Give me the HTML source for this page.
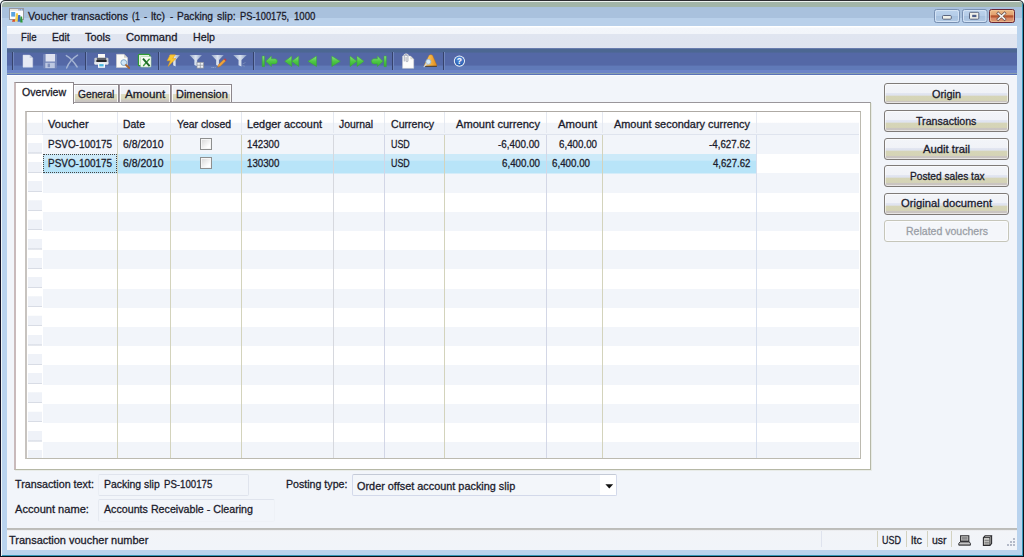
<!DOCTYPE html>
<html><head><meta charset="utf-8"><title>Voucher transactions (1 - ltc) - Packing slip: PS-100175, 1000</title>
<style>
html,body{margin:0;padding:0;}
body{width:1024px;height:557px;overflow:hidden;background:#fff;font-family:"Liberation Sans",sans-serif;font-size:11.5px;color:#1b1b2b;position:relative;}
.a{position:absolute;}
.t{position:absolute;white-space:nowrap;line-height:14px;height:14px;font-size:0;}
.w{display:inline-block;line-height:14px;transform-origin:0 0;-webkit-text-stroke:0.3px currentColor;}
#win{left:0;top:0;width:1024px;height:557px;background:#b7d0ea;border-radius:5px 5px 0 0;overflow:hidden;}
#frame{left:0;top:0;width:1022px;height:555px;border:1px solid #14142a;border-top-color:#2b2b30;border-right-color:#10101c;border-bottom-color:#10101c;border-radius:5px 5px 0 0;box-shadow:inset 1px 1px 0 rgba(245,248,246,.9),inset -1px -1px 0 #3398b8;}
.tab{position:absolute;top:84px;height:17px;border:1px solid #8d878c;border-left-color:#a59ca4;border-bottom:none;background:linear-gradient(#f1f3f7 0,#eff1f6 8.5px,#dcdcc4 9.5px,#d8d7ba 14px,#cbc7c2 15px,#c9c5c1 17px);box-shadow:inset 1px 1px 0 rgba(255,255,255,.85),inset -1px 0 0 rgba(255,255,255,.85);}
.btn{position:absolute;left:884px;width:123px;height:20px;border:1px solid #7f7b78;border-radius:3px;background:linear-gradient(#f3f5f9 0,#f0f2f7 8.8px,#e0e4f0 9.6px,#dfe3ef 11.3px,#d6d5b8 11.9px,#d5d4b6 16.4px,#cac5c1 17.4px,#c9c4c0 20px);box-shadow:inset 0 0 0 1px rgba(255,255,255,.55);}
.vsep{position:absolute;top:134.5px;width:1px;height:323.5px;background:#d3d3bc;}
.hsep{position:absolute;top:112px;width:1px;height:21px;background:#e5e9f1;}
.tsep{position:absolute;top:52px;width:1px;height:20px;background:#39466e;box-shadow:1px 0 0 #7f93c4;}
.ssep{position:absolute;top:531px;width:1px;height:16px;background:#d3d2c0;}
</style></head><body>
<div id="win" class="a">
  <!-- title bar -->
  <div class="a" style="left:0;top:0;width:1024px;height:7px;background:#a2b5a8;"></div>
  <div class="a" style="left:0;top:6.5px;width:1024px;height:11.5px;background:#a9c1dd;"></div>
  <div class="a" style="left:0;top:18px;width:1024px;height:9px;background:#b9d0ea;"></div>
  <div class="a" style="left:0;top:27px;width:1024px;height:530px;background:#b9d3ee;"></div>
  <!-- client area -->
  <div class="a" style="left:7px;top:26px;width:1010px;height:523px;background:#f2f5fa;"></div>
  <!-- menubar -->
  <div class="a" style="left:7px;top:26px;width:1010px;height:22.5px;background:linear-gradient(#ffffff 0,#ffffff 1.2px,#f3f6fb 1.8px,#f2f5fa 7.8px,#e0e5f0 8.4px,#dfe4f0 21.5px,#a6a6aa 22.2px);"></div>
  <!-- toolbar -->
  <div class="a" style="left:7px;top:48px;width:1010px;height:28px;background:linear-gradient(#a4a4a8 0,#6f80ae 0.4px,#5a72b0 0.7px,#5a72b0 1px,#4c6792 1.3px,#4c6792 4.3px,#5468a6 4.8px,#5468a6 17.3px,#607ab8 17.8px,#607ab8 21.8px,#6c84c8 22.3px,#6c84c8 24.9px,#8aa0b0 25.2px,#8aa0b0 25.8px,#5a72b8 26px,#5a72b8 26.7px,#fafcfe 27px,#fafcfe 28px);"></div>
  <svg class="a" style="left:0;top:0;" width="1024" height="557" viewBox="0 0 1024 557">
  <defs>
    <linearGradient id="gg" x1="0" y1="0" x2="0" y2="1"><stop offset="0" stop-color="#8be27f"/><stop offset="0.5" stop-color="#4fc845"/><stop offset="1" stop-color="#35b02f"/></linearGradient>
    <linearGradient id="fg" x1="0" y1="0" x2="1" y2="0"><stop offset="0" stop-color="#93a6c6"/><stop offset="0.5" stop-color="#dbe3ef"/><stop offset="1" stop-color="#8a9ec4"/></linearGradient>
    <radialGradient id="hg" cx="0.5" cy="0.3" r="0.8"><stop offset="0" stop-color="#5b93e0"/><stop offset="1" stop-color="#1b4fa3"/></radialGradient>
    <linearGradient id="bg1" x1="0" y1="0" x2="1" y2="0"><stop offset="0" stop-color="#fbe49a"/><stop offset="0.45" stop-color="#f7b747"/><stop offset="1" stop-color="#e08a1c"/></linearGradient>
  </defs>
  <!-- separators -->
  <g>
    <rect x="12" y="52" width="1" height="18" fill="#36436c"/><rect x="13" y="52" width="1" height="18" fill="#7187bd"/>
    <rect x="85" y="52" width="1" height="18" fill="#36436c"/><rect x="86" y="52" width="1" height="18" fill="#7187bd"/>
    <rect x="158" y="52" width="1" height="18" fill="#36436c"/><rect x="159" y="52" width="1" height="18" fill="#7187bd"/>
    <rect x="253" y="52" width="1" height="18" fill="#36436c"/><rect x="254" y="52" width="1" height="18" fill="#7187bd"/>
    <rect x="392" y="52" width="1" height="18" fill="#36436c"/><rect x="393" y="52" width="1" height="18" fill="#7187bd"/>
    <rect x="443" y="52" width="1" height="18" fill="#36436c"/><rect x="444" y="52" width="1" height="18" fill="#7187bd"/>
  </g>
  <!-- new doc -->
  <path d="M23 55.100h6.700l3 3V67.200H23z" fill="#e6eaf4" stroke="#d3d9e8" stroke-width="0.5"/>
  <path d="M29.7 55.100v3h3z" fill="#c3cbdf"/>
  <!-- save (disabled) -->
  <rect x="43" y="53.9" width="14" height="14.7" rx="1" fill="#7587b9"/>
  <rect x="45.6" y="54" width="9.4" height="7.5" fill="#dfe3f0"/>
  <rect x="45.3" y="62.8" width="9.5" height="5.3" fill="#bcc8e1"/>
  <rect x="47.6" y="63.6" width="2.4" height="3.6" fill="#7f90bd"/>
  <!-- delete X (disabled) -->
  <path d="M66.3 55.600C69.5 57.2 74 62 77.2 67M77.6 55.200C73 58 68.5 63.5 66.6 68" fill="none" stroke="#a3b3d2" stroke-width="1.4" stroke-linecap="round"/>
  <!-- print -->
  <rect x="98" y="54" width="7" height="4.2" fill="#f8f9f6"/>
  <rect x="94.4" y="57.8" width="14" height="6.6" rx="1" fill="#c9cdd3"/>
  <rect x="96.9" y="57.8" width="9.3" height="2.3" fill="#5c606a"/>
  <rect x="96.4" y="60" width="10.2" height="2" fill="#25272b"/>
  <rect x="94.4" y="62" width="14" height="2.4" rx="0.6" fill="#e6e9ee"/>
  <rect x="98" y="63.3" width="7" height="4.5" fill="#f4f8fb"/>
  <rect x="99.3" y="64.1" width="4.3" height="2.3" fill="#4ab8e0"/>
  <!-- preview -->
  <path d="M116.5 54.300h7.5l3.5 3.5V67.5h-11z" fill="#fafaf6" stroke="#d4d4cc" stroke-width="0.5"/>
  <path d="M124 54.300v3.5h3.5z" fill="#d0d0c8"/>
  <circle cx="123.8" cy="62.6" r="2.9" fill="#cfe6f6" stroke="#7fa7c8" stroke-width="1"/>
  <path d="M126 65l3.2 3" stroke="#a8642c" stroke-width="1.8" stroke-linecap="round"/>
  <!-- excel -->
  <rect x="138.4" y="54.3" width="11.4" height="11.4" rx="1" fill="#e3f2df" stroke="#2f9a34" stroke-width="1.2"/>
  <rect x="140.6" y="56.5" width="10.4" height="10.6" rx="0.8" fill="#f7fbf5" stroke="#a5d3a0" stroke-width="0.6"/>
  <path d="M149.6 58.800L143.2 66" stroke="#3f9a40" stroke-width="1.4"/>
  <path d="M143 58.600L149.6 66.2" stroke="#1d6a28" stroke-width="1.9"/>
  <!-- filter lightning -->
  <path d="M169 55h11l-4.3 5v6.5l-2.6-1.200V60z" fill="url(#fg)"/>
  <path d="M170.2 54.700h5.200l-2.7 3.900h3.300l-8 7.8 2.4-5.600h-3.300z" fill="#fbc832" stroke="#e59a14" stroke-width="0.5"/>
  <!-- filter grid -->
  <path d="M189.5 55h12.5l-4.8 5v6.200l-2.9-1.200V60z" fill="url(#fg)"/>
  <rect x="197" y="62.3" width="6.6" height="5.8" fill="#eef0f4" stroke="#8a8f98" stroke-width="0.7"/>
  <path d="M197 65.200h6.600M200.3 62.300v5.8" stroke="#8a8f98" stroke-width="0.7"/>
  <!-- filter pencil -->
  <path d="M211.3 55h12.5l-4.8 5v6.200l-2.9-1.200V60z" fill="url(#fg)"/>
  <path d="M217.6 67.300l1-2.7 5.4-5.4 1.7 1.7-5.4 5.400z" fill="#f0a23a" stroke="#b86a1a" stroke-width="0.4"/>
  <path d="M224 59.200l1-1 1.7 1.7-1 1z" fill="#c23a4a"/>
  <path d="M211.5 67.5h4" stroke="#aab6d4" stroke-width="0.8" stroke-dasharray="1 0.7"/>
  <!-- filter plain -->
  <path d="M233.2 55h13.600l-5.3 5v6.5l-3-1.300V60z" fill="url(#fg)"/>
  <path d="M242.5 64l3-1.5M242.5 65.5l2.5 0.8" stroke="#8496bd" stroke-width="0.7"/>
  <!-- nav: first -->
  <g fill="url(#gg)" stroke="#3aa636" stroke-width="0.5" stroke-linejoin="round">
    <rect x="262.2" y="56" width="2.3" height="10.6"/>
    <path d="M265.8 61.300l5.6-5.300v2.700h3.300a2.6 2.6 0 0 1 0 5.200h-3.300v2.700z"/>
    <path d="M284.7 61.300l7-5.300v10.600zM291.7 61.300l7-5.300v10.600z"/>
    <path d="M308 61.300l8.5-5.300v10.600z"/>
    <path d="M340.3 61.300l-8.5-5.300v10.600z"/>
    <path d="M364 61.300l-7-5.300v10.600zM357 61.300l-7-5.300v10.600z"/>
    <path d="M383 61.300l-5.6-5.300v2.700h-3.300a2.6 2.6 0 0 0 0 5.200h3.300v2.700z"/>
    <rect x="384" y="56" width="2.3" height="10.6"/>
  </g>
  <!-- doc w/ clip -->
  <path d="M402.6 56h7.800l3.3 3.300V68.300h-11.100z" fill="#fdfdfb" stroke="#d9d9d2" stroke-width="0.5"/>
  <path d="M410.4 56v3.300h3.300z" fill="#d8d8d0"/>
  <path d="M404.3 61.400v-5.300a1.8 1.8 0 0 1 3.6 0v4.600a0.9 0.9 0 0 1-1.8 0v-3.6" fill="none" stroke="#eceef2" stroke-width="1.7"/>
  <path d="M404.3 61.400v-5.300a1.8 1.8 0 0 1 3.6 0v4.600a0.9 0.9 0 0 1-1.8 0v-3.6" fill="none" stroke="#8d929c" stroke-width="0.6"/>
  <!-- bell -->
  <path d="M428.9 55.600c0.3-1.3 3.5-1.3 3.8 0l4 9.300c0.3 0.9-0.2 1.3-1 1.300h-10.400c-0.8 0-1.3-0.4-1-1.300z" fill="url(#bg1)" stroke="#b06a1a" stroke-width="0.4"/>
  <path d="M424.3 66.300h12.6" stroke="#3d3122" stroke-width="0.9"/>
  <circle cx="428.4" cy="61.8" r="2.5" fill="#d8ecf8" stroke="#9db4cc" stroke-width="0.9"/>
  <path d="M426.6 63.800l-2.5 2.9" stroke="#cdd2da" stroke-width="1.2" stroke-linecap="round"/>
  <!-- help -->
  <circle cx="459.4" cy="61.1" r="5.6" fill="#eef3fa"/>
  <circle cx="459.4" cy="61.1" r="4.6" fill="url(#hg)"/>
  <text x="459.4" y="64.4" text-anchor="middle" font-family="Liberation Sans, sans-serif" font-weight="bold" font-size="8.5" fill="#fff">?</text>
</svg>

  <svg class="a" style="left:0;top:0;" width="1024" height="40" viewBox="0 0 1024 40">
  <defs>
    <linearGradient id="cb" x1="0" y1="0" x2="0" y2="1"><stop offset="0" stop-color="#bdd3ec"/><stop offset="0.5" stop-color="#b4cce8"/><stop offset="0.52" stop-color="#a7c1df"/><stop offset="1" stop-color="#b3cbe6"/></linearGradient>
    <linearGradient id="cr" x1="0" y1="0" x2="0" y2="1"><stop offset="0" stop-color="#edbd86"/><stop offset="0.42" stop-color="#e2a070"/><stop offset="0.48" stop-color="#b4522c"/><stop offset="0.6" stop-color="#b85a34"/><stop offset="0.64" stop-color="#d98868"/><stop offset="1" stop-color="#dc9a6c"/></linearGradient>
  </defs>
  <!-- app icon -->
  <rect x="9.5" y="8.5" width="14" height="11" fill="#fdfdfd" stroke="#98989c" stroke-width="1"/>
  <rect x="10" y="9" width="13" height="1.8" fill="#e4e2dc"/>
  <rect x="18.5" y="9.2" width="1" height="1.2" fill="#4a78c8"/><rect x="20.2" y="9.2" width="1" height="1.2" fill="#4a78c8"/><rect x="21.8" y="9.2" width="1" height="1.2" fill="#4a78c8"/>
  <rect x="11.2" y="12" width="4" height="4.6" fill="#5aa4e0"/>
  <path d="M15 21.500l1-8.300h2v8.300z" fill="#f8cf48"/>
  <path d="M17.600 21.800l0.600-6.800h2l0.800 6.800z" fill="#3d6fc0"/>
  <path d="M20.300 22.500l0.200-6h1.600l0.500 6z" fill="#2f9a36"/>
  <path d="M12 21.800l0.800-2.300h2l0.300 2.300z" fill="#d8502a"/>
  <!-- min -->
  <rect x="934.5" y="9.5" width="25" height="13" rx="2" fill="url(#cb)" stroke="#7890b2" stroke-width="1"/>
  <rect x="935.5" y="10.5" width="23" height="11" rx="1.8" fill="none" stroke="#d8e6f6" stroke-width="1" opacity="0.9"/>
  <rect x="942.5" y="15.5" width="8.8" height="3.700" rx="1" fill="#f1f1ea" stroke="#4d5874" stroke-width="0.9"/>
  <!-- max -->
  <rect x="962.5" y="9.5" width="24.5" height="13" rx="2" fill="url(#cb)" stroke="#7890b2" stroke-width="1"/>
  <rect x="963.5" y="10.5" width="22.5" height="11" rx="1.8" fill="none" stroke="#d8e6f6" stroke-width="1" opacity="0.9"/>
  <rect x="969.5" y="12.3" width="9.3" height="6.9" rx="1" fill="#efefe8" stroke="#4d5874" stroke-width="0.9"/>
  <rect x="972.2" y="14.8" width="4.2" height="2.3" fill="#4d5d88"/>
  <!-- close -->
  <rect x="989.5" y="9.5" width="25" height="13" rx="2" fill="url(#cr)" stroke="#6a2636" stroke-width="1"/>
  <rect x="990.5" y="10.5" width="23" height="11" rx="1.8" fill="none" stroke="#f3cfa8" stroke-width="0.8" opacity="0.700"/>
  <path d="M998.200 13.300l6.400 5.900M1004.600 13.300l-6.400 5.9" stroke="#5e4a4a" stroke-width="2.8" stroke-linecap="square"/>
  <path d="M998.200 13.300l6.400 5.900M1004.600 13.300l-6.400 5.9" stroke="#f6f6f2" stroke-width="1.6" stroke-linecap="square"/>
</svg>


  <!-- tab panel -->
  <div class="a" style="left:14px;top:102px;width:854px;height:366px;background:#fff;border:1px solid #b6b8a6;border-left:2px solid #c9babb;border-top-color:#9a969b;box-shadow:1px 1px 0 rgba(225,228,218,.6);"></div>
  <div class="tab" style="left:73px;width:44px;"></div>
  <div class="tab" style="left:119px;width:50px;"></div>
  <div class="tab" style="left:171px;width:59px;"></div>
  <div class="a" style="left:14px;top:82px;width:57px;height:21px;background:#fff;border:1px solid #8d878c;border-left:2px solid #c9babb;border-bottom:none;"></div>

  <!-- grid -->
  <div class="a" style="left:25px;top:111px;width:833px;height:346px;background:#fff;border:1px solid #aeaaa4;border-left:2px solid #c7c3bf;border-right-color:#bcbab0;border-bottom-color:#bcbab0;overflow:hidden;">
    <!-- header -->
    <div class="a" style="left:0px;top:0.5px;width:832px;height:22.5px;background:linear-gradient(#fff 0,#fff 9.4px,#f1f4f9 9.9px,#f1f4f9 21px,#dfe4ee 21.5px,#e6eaf2 22.5px);"></div>
    <!-- stripes -->
    <div class="a" style="left:16px;top:23px;width:816px;height:330px;background:repeating-linear-gradient(#f2f5fa 0,#f2f5fa 19.2px,#fff 19.2px,#fff 38.4px);"></div>
    <!-- row header column -->
    <div class="a" style="left:1px;top:23px;width:14px;height:330px;background:repeating-linear-gradient(#fff 0,#fff 7.6px,#eff2f8 8px,#eff2f8 17.3px,#d8dce5 17.6px,#d8dce5 18.4px,#fff 18.7px,#fff 19.2px);"></div>
    <div class="a" style="left:1px;top:0.5px;width:14px;height:22px;background:linear-gradient(#fff 0,#fff 9.4px,#f0f3f8 9.9px,#f0f3f8 21px,#dde2ec 22px);"></div>
  </div>
  <!-- selected row -->
  <div class="a" style="left:43px;top:154px;width:713px;height:20px;background:linear-gradient(#cdeaf9 0,#cdeaf9 6.3px,#b8e4f8 6.9px,#b8e4f8 19px,rgba(184,228,248,0) 20px);"></div>
    <div class="vsep" style="left:117px;"></div>
  <div class="vsep" style="left:170px;"></div>
  <div class="vsep" style="left:241px;"></div>
  <div class="vsep" style="left:333px;background:#d6d8de;"></div>
  <div class="vsep" style="left:384px;background:#d2d6e6;"></div>
  <div class="vsep" style="left:444px;"></div>
  <div class="vsep" style="left:545.5px;background:#d3d7e6;"></div>
  <div class="vsep" style="left:602px;"></div>
  <div class="vsep" style="left:756px;background:#d7dfee;"></div>
  <div class="hsep" style="left:42px;"></div>
  <div class="hsep" style="left:117px;"></div>
  <div class="hsep" style="left:170px;"></div>
  <div class="hsep" style="left:241px;"></div>
  <div class="hsep" style="left:333px;"></div>
  <div class="hsep" style="left:384px;"></div>
  <div class="hsep" style="left:444px;"></div>
  <div class="hsep" style="left:545.5px;"></div>
  <div class="hsep" style="left:602px;"></div>
  <div class="hsep" style="left:756px;"></div>

  <div class="a" style="left:43px;top:154px;width:72px;height:17px;border:1px dotted #444;"></div>
  <!-- checkboxes -->
  <div class="a" style="left:200px;top:138px;width:9.5px;height:9.5px;border:1px solid #8e8f8f;background:linear-gradient(135deg,#d6d6d6,#fff 75%);box-shadow:inset 0 0 0 1px #f6f6f6;"></div>
  <div class="a" style="left:200px;top:157px;width:9.5px;height:9.5px;border:1px solid #8e8f8f;background:linear-gradient(135deg,#d6d6d6,#fff 75%);box-shadow:inset 0 0 0 1px #f6f6f6;"></div>

  <!-- buttons -->
  <div class="btn" style="top:83px;height:19px;"></div>
  <div class="btn" style="top:110px;"></div>
  <div class="btn" style="top:138px;"></div>
  <div class="btn" style="top:165px;"></div>
  <div class="btn" style="top:193px;"></div>
  <div class="btn" style="top:220px;background:#f4f6fa;border-color:#c6c6ba;"></div>

  <!-- bottom fields -->
  <div class="a" style="left:98px;top:473.5px;width:148.5px;height:20.5px;border:1px solid #e0e4ed;border-left-color:#eaeef4;border-radius:2px;background:#f2f5fa;"></div>
  <div class="a" style="left:98px;top:499px;width:175px;height:20.5px;border:1px solid #e0e4ed;border-left-color:#e6eaf1;border-right-color:#eef1f6;border-bottom-color:#eff2f7;border-radius:2px;background:#f2f5fa;"></div>
  <div class="a" style="left:352px;top:474px;width:263px;height:20px;border:1px solid #d3d9ea;border-top-color:#c4cad6;border-radius:2px;background:linear-gradient(90deg,#f3f6fa 0,#f3f6fa 247px,#fff 247px,#fff 263px);"></div>
  <svg class="a" style="left:604.5px;top:483.5px;" width="9" height="5" viewBox="0 0 9 5"><path d="M0.4 0.3h7.8L4.3 4.6z" fill="#111"/></svg>

  <!-- status bar -->
  <div class="a" style="left:7px;top:528px;width:1010px;height:21.5px;background:linear-gradient(#e4e6ea 0,#bcbcb9 0.5px,#bdbdba 1.4px,#c9c9c7 2px,#f2f4f8 2.6px,#f1f4f9 21px);"></div>
  <div class="ssep" style="left:821px;background:#dfe3ee;"></div>
  <div class="ssep" style="left:877px;"></div>
  <div class="ssep" style="left:906px;"></div>
  <div class="ssep" style="left:927px;"></div>
  <div class="ssep" style="left:951px;"></div>
  <svg class="a" style="left:950px;top:528px;" width="70" height="22" viewBox="950 528 70 22">
  <!-- computer -->
  <path d="M960.6 535.8h8.2v5.6h-8.2z" fill="#d4d4d0" stroke="#2c2c30" stroke-width="1.1"/>
  <path d="M961.8 537.3h5.8M961.8 538.7h5.8M961.8 540h5.8" stroke="#55555a" stroke-width="0.7"/>
  <path d="M958.8 543.3l1.8-1.9h8.2l1.6 1.9v1.9h-11.6z" fill="#8c8c8e" stroke="#2c2c30" stroke-width="0.9"/>
  <path d="M959.5 543.6h10.2" stroke="#e8e8e8" stroke-width="0.7"/>
  <!-- db/server -->
  <path d="M983.4 537.6l1.7-1.8h6.5v7.8l-1.7 1.8h-6.5z" fill="#bdbdb9" stroke="#2c2c30" stroke-width="1.1"/>
  <path d="M983.4 537.6h6.5v7.8M989.9 537.6l1.7-1.8" fill="none" stroke="#2c2c30" stroke-width="0.9"/>
  <rect x="984.3" y="538.5" width="4.8" height="6" fill="#e6e6e2"/>
  <path d="M984.5 540.2h4.4M984.5 542.2h4.4M984.5 544h4.4" stroke="#3c3c40" stroke-width="0.8"/>
  <!-- grip -->
  <g fill="#b4bac8"><rect x="1013" y="538" width="2" height="2"/><rect x="1010" y="541" width="2" height="2"/><rect x="1013" y="541" width="2" height="2"/><rect x="1007" y="544" width="2" height="2"/><rect x="1010" y="544" width="2" height="2"/><rect x="1013" y="544" width="2" height="2"/></g>
</svg>


<span class="t" style="left:27.50px;top:9.00px;color:#1b1b2b"><span class="w" style="width:39.40px;margin-right:3.90px;font-size:11.5px;transform:scaleX(0.9336)">Voucher</span> <span class="w" style="width:57.00px;margin-right:3.90px;font-size:11.5px;transform:scaleX(0.9191)">transactions</span> <span class="w" style="width:7.80px;margin-right:4.70px;font-size:11.5px;transform:scaleX(0.7621)">(1</span> <span class="w" style="width:3.10px;margin-right:3.95px;font-size:11.5px;transform:scaleX(0.8065)">-</span> <span class="w" style="width:14.05px;margin-right:4.50px;font-size:11.5px;transform:scaleX(0.9157)">ltc)</span> <span class="w" style="width:3.20px;margin-right:3.70px;font-size:11.5px;transform:scaleX(0.8325)">-</span> <span class="w" style="width:36.00px;margin-right:4.60px;font-size:11.5px;transform:scaleX(0.8797)">Packing</span> <span class="w" style="width:18.70px;margin-right:4.00px;font-size:11.5px;transform:scaleX(0.9143)">slip:</span> <span class="w" style="width:49.20px;margin-right:4.70px;font-size:11.5px;transform:scaleX(0.8099)">PS-100175,</span> <span class="w" style="width:21.40px;font-size:11.5px;transform:scaleX(0.8361)">1000</span></span>
<span class="t" style="left:21.00px;top:30.00px;color:#1b1b2b"><span class="w" style="width:15.50px;font-size:11.5px;transform:scaleX(0.8364)">File</span></span>
<span class="t" style="left:51.70px;top:30.00px;color:#1b1b2b"><span class="w" style="width:17.60px;font-size:11.5px;transform:scaleX(0.8876)">Edit</span></span>
<span class="t" style="left:85.00px;top:30.00px;color:#1b1b2b"><span class="w" style="width:25.50px;font-size:11.5px;transform:scaleX(0.9494)">Tools</span></span>
<span class="t" style="left:125.50px;top:30.00px;color:#1b1b2b"><span class="w" style="width:51.50px;font-size:11.5px;transform:scaleX(0.9706)">Command</span></span>
<span class="t" style="left:192.50px;top:30.00px;color:#1b1b2b"><span class="w" style="width:22.00px;font-size:11.5px;transform:scaleX(0.9300)">Help</span></span>
<span class="t" style="left:22.40px;top:84.50px;color:#1b1b2b"><span class="w" style="width:44.10px;font-size:11.5px;transform:scaleX(0.9199)">Overview</span></span>
<span class="t" style="left:77.60px;top:87.10px;color:#1b1b2b"><span class="w" style="width:36.40px;font-size:11.5px;transform:scaleX(0.8895)">General</span></span>
<span class="t" style="left:124.80px;top:87.10px;color:#1b1b2b"><span class="w" style="width:40.20px;font-size:11.5px;transform:scaleX(1.0141)">Amount</span></span>
<span class="t" style="left:175.80px;top:87.10px;color:#1b1b2b"><span class="w" style="width:51.80px;font-size:11.5px;transform:scaleX(0.9535)">Dimension</span></span>
<span class="t" style="left:48.40px;top:116.80px;color:#1b1b2b"><span class="w" style="width:40.60px;font-size:11.5px;transform:scaleX(0.9620)">Voucher</span></span>
<span class="t" style="left:123.40px;top:116.80px;color:#1b1b2b"><span class="w" style="width:21.90px;font-size:11.5px;transform:scaleX(0.9014)">Date</span></span>
<span class="t" style="left:176.50px;top:116.80px;color:#1b1b2b"><span class="w" style="width:54.00px;font-size:11.5px;transform:scaleX(0.9047)">Year closed</span></span>
<span class="t" style="left:247.30px;top:116.80px;color:#1b1b2b"><span class="w" style="width:75.00px;font-size:11.5px;transform:scaleX(0.9458)">Ledger account</span></span>
<span class="t" style="left:339.00px;top:116.80px;color:#1b1b2b"><span class="w" style="width:34.00px;font-size:11.5px;transform:scaleX(0.9014)">Journal</span></span>
<span class="t" style="left:390.50px;top:116.80px;color:#1b1b2b"><span class="w" style="width:43.00px;font-size:11.5px;transform:scaleX(0.9216)">Currency</span></span>
<span class="t" style="left:456.00px;top:116.80px;color:#1b1b2b"><span class="w" style="width:84.00px;font-size:11.5px;transform:scaleX(0.9662)">Amount currency</span></span>
<span class="t" style="left:557.70px;top:116.80px;color:#1b1b2b"><span class="w" style="width:39.10px;font-size:11.5px;transform:scaleX(0.9864)">Amount</span></span>
<span class="t" style="left:614.40px;top:116.80px;color:#1b1b2b"><span class="w" style="width:135.90px;font-size:11.5px;transform:scaleX(0.9491)">Amount secondary currency</span></span>
<span class="t" style="left:48.40px;top:136.80px;color:#1b1b2b"><span class="w" style="width:64.10px;font-size:11.5px;transform:scaleX(0.8642)">PSVO-100175</span></span>
<span class="t" style="left:123.40px;top:136.80px;color:#1b1b2b"><span class="w" style="width:40.60px;font-size:11.5px;transform:scaleX(0.9069)">6/8/2010</span></span>
<span class="t" style="left:390.50px;top:136.80px;color:#1b1b2b"><span class="w" style="width:18.80px;font-size:11.5px;transform:scaleX(0.7743)">USD</span></span>
<span class="t" style="left:48.40px;top:156.00px;color:#1b1b2b"><span class="w" style="width:64.10px;font-size:11.5px;transform:scaleX(0.8642)">PSVO-100175</span></span>
<span class="t" style="left:123.40px;top:156.00px;color:#1b1b2b"><span class="w" style="width:40.60px;font-size:11.5px;transform:scaleX(0.9069)">6/8/2010</span></span>
<span class="t" style="left:390.50px;top:156.00px;color:#1b1b2b"><span class="w" style="width:18.80px;font-size:11.5px;transform:scaleX(0.7743)">USD</span></span>
<span class="t" style="left:247.30px;top:136.80px;color:#1b1b2b"><span class="w" style="width:32.40px;font-size:11.5px;transform:scaleX(0.8443)">142300</span></span>
<span class="t" style="left:247.30px;top:156.00px;color:#1b1b2b"><span class="w" style="width:32.40px;font-size:11.5px;transform:scaleX(0.8443)">130300</span></span>
<span class="t" style="left:498.40px;top:136.80px;color:#1b1b2b"><span class="w" style="width:41.60px;font-size:11.5px;transform:scaleX(0.8558)">-6,400.00</span></span>
<span class="t" style="left:559.00px;top:136.80px;color:#1b1b2b"><span class="w" style="width:38.00px;font-size:11.5px;transform:scaleX(0.8489)">6,400.00</span></span>
<span class="t" style="left:709.00px;top:136.80px;color:#1b1b2b"><span class="w" style="width:41.30px;font-size:11.5px;transform:scaleX(0.8496)">-4,627.62</span></span>
<span class="t" style="left:502.00px;top:156.00px;color:#1b1b2b"><span class="w" style="width:38.00px;font-size:11.5px;transform:scaleX(0.8489)">6,400.00</span></span>
<span class="t" style="left:552.00px;top:156.00px;color:#1b1b2b"><span class="w" style="width:38.00px;font-size:11.5px;transform:scaleX(0.8489)">6,400.00</span></span>
<span class="t" style="left:713.00px;top:156.00px;color:#1b1b2b"><span class="w" style="width:37.30px;font-size:11.5px;transform:scaleX(0.8332)">4,627.62</span></span>
<span class="t" style="left:931.70px;top:87.00px;color:#1b1b2b"><span class="w" style="width:29.00px;font-size:11.5px;transform:scaleX(0.9450)">Origin</span></span>
<span class="t" style="left:916.30px;top:114.30px;color:#1b1b2b"><span class="w" style="width:60.40px;font-size:11.5px;transform:scaleX(0.9235)">Transactions</span></span>
<span class="t" style="left:923.00px;top:142.00px;color:#1b1b2b"><span class="w" style="width:47.00px;font-size:11.5px;transform:scaleX(0.9804)">Audit trail</span></span>
<span class="t" style="left:909.50px;top:169.00px;color:#1b1b2b"><span class="w" style="width:74.70px;font-size:11.5px;transform:scaleX(0.8852)">Posted sales tax</span></span>
<span class="t" style="left:901.00px;top:196.20px;color:#1b1b2b"><span class="w" style="width:91.00px;font-size:11.5px;transform:scaleX(0.9751)">Original document</span></span>
<span class="t" style="left:905.70px;top:223.50px;color:#9a9ea6"><span class="w" style="width:81.90px;font-size:11.5px;transform:scaleX(0.9151)">Related vouchers</span></span>
<span class="t" style="left:14.60px;top:476.50px;color:#1b1b2b"><span class="w" style="width:78.90px;font-size:11.5px;transform:scaleX(0.9327)">Transaction text:</span></span>
<span class="t" style="left:103.50px;top:476.50px;color:#1b1b2b"><span class="w" style="width:55.75px;margin-right:5.00px;font-size:11.5px;transform:scaleX(0.9084)">Packing slip</span> <span class="w" style="width:48.25px;font-size:11.5px;transform:scaleX(0.8384)">PS-100175</span></span>
<span class="t" style="left:14.60px;top:501.50px;color:#1b1b2b"><span class="w" style="width:73.90px;font-size:11.5px;transform:scaleX(0.9633)">Account name:</span></span>
<span class="t" style="left:103.50px;top:501.50px;color:#1b1b2b"><span class="w" style="width:149.00px;font-size:11.5px;transform:scaleX(0.9286)">Accounts Receivable - Clearing</span></span>
<span class="t" style="left:286.30px;top:476.60px;color:#1b1b2b"><span class="w" style="width:61.40px;font-size:11.5px;transform:scaleX(0.9235)">Posting type:</span></span>
<span class="t" style="left:357.40px;top:479.00px;color:#1b1b2b"><span class="w" style="width:158.20px;font-size:11.5px;transform:scaleX(0.9457)">Order offset account packing slip</span></span>
<span class="t" style="left:9.20px;top:532.80px;color:#1b1b2b"><span class="w" style="width:139.30px;font-size:11.5px;transform:scaleX(0.9544)">Transaction voucher number</span></span>
<span class="t" style="left:882.00px;top:532.70px;color:#1b1b2b"><span class="w" style="width:19.00px;font-size:11.5px;transform:scaleX(0.7825)">USD</span></span>
<span class="t" style="left:911.00px;top:532.70px;color:#1b1b2b"><span class="w" style="width:10.90px;font-size:11.5px;transform:scaleX(0.9478)">ltc</span></span>
<span class="t" style="left:932.00px;top:532.70px;color:#1b1b2b"><span class="w" style="width:14.60px;font-size:11.5px;transform:scaleX(0.9134)">usr</span></span>
  <div id="frame" class="a"></div>
</div>
</body></html>
